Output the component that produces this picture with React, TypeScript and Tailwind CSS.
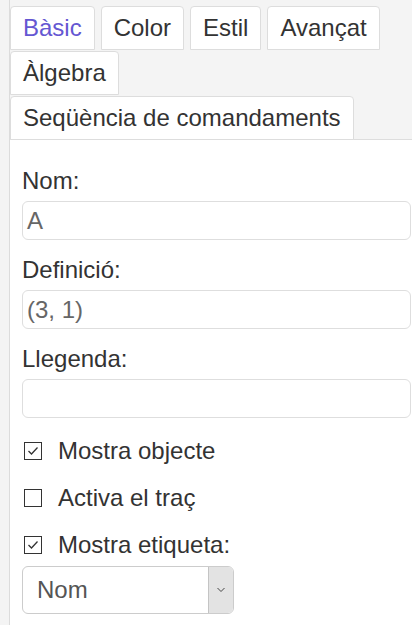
import React from 'react';

const tabs = ['Bàsic', 'Color', 'Estil', 'Avançat', 'Àlgebra', 'Seqüència de comandaments'];

function Field({ label, value }: { label: string; value: string }) {
  return (
    <div className="flex flex-col">
      <div className="h-[28px] leading-[28px] text-[#333]">{label}</div>
      <div className="mt-[6px] h-[39px] rounded-[6px] border border-[#dedede] bg-white pl-[4px] flex items-center text-[#666]">
        {value}
      </div>
    </div>
  );
}

function Check({ label, checked }: { label: string; checked: boolean }) {
  return (
    <div className="flex items-center h-[28px]">
      <div className="ml-[2px] w-[18px] h-[18px] border border-[#333] bg-white flex items-center justify-center">
        {checked && (
          <svg width="14" height="14" viewBox="0 0 14 14" fill="none" stroke="#333" strokeWidth="1.3">
            <path d="M2.5 7 L5.5 10 L11.5 3.5" />
          </svg>
        )}
      </div>
      <span className="ml-[16px] leading-[28px] text-[#333]">{label}</span>
    </div>
  );
}

export default function App() {
  return (
    <div className="w-[412px] h-[625px] bg-[#f4f4f4] pl-[9px] overflow-hidden font-['Liberation_Sans',Arial,sans-serif] text-[24px]">
      <div className="h-full border-l border-[#dcdcdc] flex flex-col">
        {/* tabs */}
        <div className="relative z-10 -mb-px flex flex-wrap gap-x-[6px] gap-y-[1px] pt-[6px]">
          {tabs.map((t, i) => (
            <div
              key={t}
              className={
                'h-[44px] px-[12px] bg-white border border-[#dddddd] rounded-t-[4px] flex items-center leading-none ' +
                (i === 0 ? 'text-[#6557d2]' : 'text-[#333]')
              }
            >
              {t}
            </div>
          ))}
        </div>

        {/* content */}
        <div className="flex-1 bg-white border-t border-[#dddddd] pl-[12px] pr-[1px] pt-[27px] flex flex-col">
          <div className="flex flex-col gap-[16px]">
            <Field label="Nom:" value="A" />
            <Field label="Definició:" value="(3, 1)" />
            <Field label="Llegenda:" value="" />
          </div>

          <div className="mt-[19px] flex flex-col gap-[19px]">
            <Check label="Mostra objecte" checked />
            <Check label="Activa el traç" checked={false} />
            <Check label="Mostra etiqueta:" checked />
          </div>

          <div className="mt-[7px] w-[212px] h-[48px] rounded-[6px] border border-[#cccccc] bg-white flex overflow-hidden">
            <div className="flex-1 flex items-center pl-[14px] text-[#555]">Nom</div>
            <div className="w-[25px] bg-[#e3e3e3] border-l border-[#c4c4c4] flex items-center justify-center">
              <svg width="10" height="6" viewBox="0 0 10 6" fill="none" stroke="#444" strokeWidth="1">
                <path d="M1.5 1 L5 4.5 L8.5 1" />
              </svg>
            </div>
          </div>
        </div>
      </div>
    </div>
  );
}
